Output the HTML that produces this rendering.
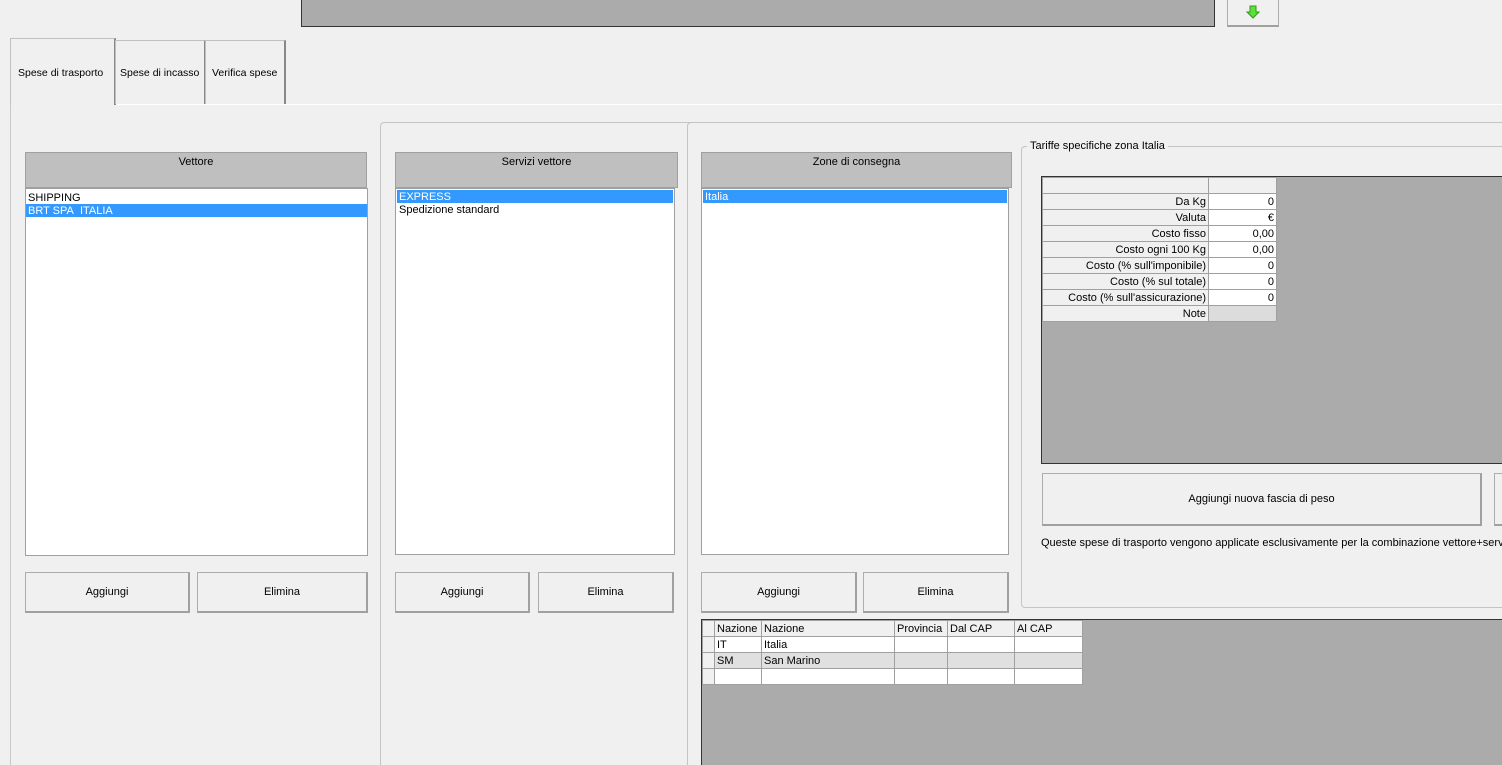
<!DOCTYPE html>
<html><head><meta charset="utf-8"><style>
*{box-sizing:border-box;margin:0;padding:0}
html{overflow:hidden;height:765px}
body{width:1502px;height:765px;background:#f0f0f0;position:relative;overflow:hidden;font-family:"Liberation Sans",sans-serif;font-size:11px;color:#000}
.a{position:absolute}
.hdr{background:#bfbfbf;border:1px solid #a0a0a0;text-align:center;padding-top:3px}
.list{background:#fff;border:1px solid #a0a0a0}
.it{height:13px;line-height:14px;padding-left:2px;white-space:nowrap}
.sel{background:#3399ff;color:#fff}
.btn{background:#f0f0f0;border:1px solid #adadad;border-right:2px solid #a0a0a0;border-bottom:2px solid #a0a0a0;display:flex;align-items:center;justify-content:center}
.tab{border:1px solid #c0c0c0;border-bottom:none;border-right:2px solid #888;background:#f0f0f0;padding-top:27px;padding-left:5px;white-space:nowrap;font-size:10.5px}
table{border-collapse:collapse}
td{border:1px solid #a0a0a0;height:16px;padding:0 2px;font-size:11px;white-space:nowrap}
</style></head><body>
<div class="a" style="left:301px;top:-2px;width:914px;height:29px;background:#ababab;border:1px solid #333"></div>
<div class="a btn" style="left:1227px;top:-2px;width:52px;height:29px;border-right:1px solid #adadad;border-bottom:2px solid #a0a0a0">
<svg width="14" height="14" viewBox="0 0 14 14"><path d="M4 1h6v6h3l-6 6-6-6h3z" fill="#5de03a" stroke="#2f9a1a"/></svg></div>

<div class="a" style="left:10px;top:104px;width:1500px;height:670px;border-left:1px solid #c8c8c8;border-top:1px solid #fff"></div>
<div class="a tab" style="left:10px;top:38px;width:106px;height:67px;padding-top:28px;padding-left:7px">Spese di trasporto</div>
<div class="a tab" style="left:115px;top:40px;width:91px;height:64px;padding-top:26px;padding-left:4px">Spese di incasso</div>
<div class="a tab" style="left:205px;top:40px;width:81px;height:64px;padding-top:26px;padding-left:6px">Verifica spese</div>

<div class="a" style="left:380px;top:122px;width:320px;height:660px;border:1px solid #c4c4c4;border-radius:4px"></div>
<div class="a" style="left:687px;top:122px;width:830px;height:660px;border:1px solid #c4c4c4;border-radius:4px;background:#f0f0f0"></div>

<div class="a hdr" style="left:25px;top:152px;width:342px;height:36px">Vettore</div>
<div class="a list" style="left:25px;top:188px;width:343px;height:368px;padding-top:2px"><div class="it">SHIPPING</div><div class="it sel">BRT SPA&nbsp; ITALIA</div></div>
<div class="a btn" style="left:25px;top:572px;width:165px;height:41px">Aggiungi</div>
<div class="a btn" style="left:197px;top:572px;width:171px;height:41px">Elimina</div>

<div class="a hdr" style="left:395px;top:152px;width:283px;height:36px">Servizi vettore</div>
<div class="a list" style="left:395px;top:188px;width:280px;height:367px;padding:1px"><div class="it sel">EXPRESS</div><div class="it">Spedizione standard</div></div>
<div class="a btn" style="left:395px;top:572px;width:135px;height:41px">Aggiungi</div>
<div class="a btn" style="left:538px;top:572px;width:136px;height:41px">Elimina</div>

<div class="a hdr" style="left:701px;top:152px;width:311px;height:36px">Zone di consegna</div>
<div class="a list" style="left:701px;top:188px;width:308px;height:367px;padding:1px"><div class="it sel">Italia</div></div>
<div class="a btn" style="left:701px;top:572px;width:156px;height:41px">Aggiungi</div>
<div class="a btn" style="left:863px;top:572px;width:146px;height:41px">Elimina</div>

<div class="a" style="left:701px;top:619px;width:810px;height:150px;background:#ababab;border:1px solid #333"></div>
<table class="a" style="left:702px;top:620px;background:#fff">
<tr style="background:#f0f0f0"><td style="width:12px"></td><td style="width:47px">Nazione</td><td style="width:133px">Nazione</td><td style="width:53px">Provincia</td><td style="width:67px">Dal CAP</td><td style="width:68px">Al CAP</td></tr>
<tr><td style="background:#f0f0f0"></td><td>IT</td><td>Italia</td><td></td><td></td><td></td></tr>
<tr style="background:#e0e0e0"><td style="background:#f0f0f0"></td><td>SM</td><td>San Marino</td><td></td><td></td><td></td></tr>
<tr><td style="background:#f0f0f0"></td><td></td><td></td><td></td><td></td><td></td></tr>
</table>

<div class="a" style="left:1021px;top:146px;width:500px;height:462px;border:1px solid #c4c4c4;border-radius:4px"></div>
<div class="a" style="left:1027px;top:140px;background:#f0f0f0;padding:0 3px">Tariffe specifiche zona Italia</div>
<div class="a" style="left:1041px;top:176px;width:470px;height:288px;background:#ababab;border:1px solid #333"></div>
<table class="a" style="left:1042px;top:177px;text-align:right">
<tr><td style="width:166px;background:#f0f0f0"></td><td style="width:68px;background:#f0f0f0"></td></tr>
<tr><td style="background:#f0f0f0">Da Kg</td><td style="background:#fff">0</td></tr>
<tr><td style="background:#f0f0f0">Valuta</td><td style="background:#fff">€</td></tr>
<tr><td style="background:#f0f0f0">Costo fisso</td><td style="background:#fff">0,00</td></tr>
<tr><td style="background:#f0f0f0">Costo ogni 100 Kg</td><td style="background:#fff">0,00</td></tr>
<tr><td style="background:#f0f0f0">Costo (% sull'imponibile)</td><td style="background:#fff">0</td></tr>
<tr><td style="background:#f0f0f0">Costo (% sul totale)</td><td style="background:#fff">0</td></tr>
<tr><td style="background:#f0f0f0">Costo (% sull'assicurazione)</td><td style="background:#fff">0</td></tr>
<tr><td style="background:#f0f0f0">Note</td><td style="background:#dcdcdc"></td></tr>
</table>
<div class="a btn" style="left:1042px;top:473px;width:440px;height:53px">Aggiungi nuova fascia di peso</div>
<div class="a btn" style="left:1494px;top:473px;width:30px;height:53px"></div>
<div class="a" style="left:1041px;top:537px;white-space:nowrap">Queste spese di trasporto vengono applicate esclusivamente per la combinazione vettore+servizio</div>
</body></html>
